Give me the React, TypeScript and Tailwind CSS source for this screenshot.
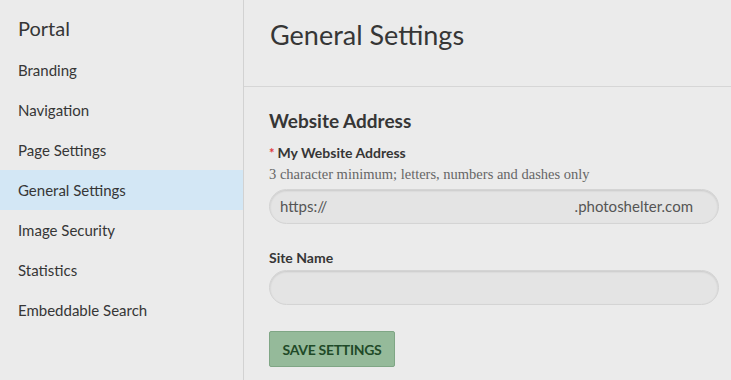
import React from "react";

const items = ["Branding", "Navigation", "Page Settings", "General Settings", "Image Security", "Statistics", "Embeddable Search"];

export default function App() {
  return (
    <div className="flex h-[380px] w-[731px] overflow-hidden bg-[#ebebeb] text-[#363636]" style={{ fontFamily: "Lato, 'Open Sans', sans-serif" }}>
      <aside className="w-[244px] shrink-0 border-r border-[#d2d2d2] pt-[14px]">
        <div className="px-[18px] text-[20px] leading-[28px]">Portal</div>
        <ul className="mt-[8px]">
          {items.map((it) => (
            <li
              key={it}
              className={`flex h-[40px] items-center px-[18px] text-[15px] ${it === "General Settings" ? "bg-[#d3e7f5]" : ""}`}
            >
              {it}
            </li>
          ))}
        </ul>
      </aside>
      <main className="flex-1">
        <div className="h-[87px] border-b border-[#d6d6d6] px-[26px] pt-[18px]">
          <h1 className="text-[27px] leading-[34px]">General Settings</h1>
        </div>
        <div className="px-[25px] pt-[22px]">
          <h2 className="text-[19px] font-bold leading-[24px]">Website Address</h2>
          <div className="mt-[11px] flex items-center text-[14px] font-bold leading-[18px]">
            <span className="mr-[3px] text-[13px] text-[#e0393e]">*</span>My Website Address
          </div>
          <div className="mt-[3px] text-[14.5px] leading-[18px] text-[#666]" style={{ fontFamily: "'Liberation Serif', serif" }}>
            3 character minimum; letters, numbers and dashes only
          </div>
          <div className="mt-[6px] flex h-[35px] w-[450px] items-center justify-between rounded-full border border-[#d4d4d4] bg-[#e4e4e4] px-[10px] text-[15px] text-[#555] shadow-[inset_0_1px_2px_rgba(0,0,0,0.12)]">
            <span>https://</span>
            <span className="mr-[15px]">.photoshelter.com</span>
          </div>
          <div className="mt-[25px] text-[14px] font-bold leading-[18px]">Site Name</div>
          <div className="mt-[3px] h-[35px] w-[450px] rounded-full border border-[#d4d4d4] bg-[#e4e4e4] shadow-[inset_0_1px_2px_rgba(0,0,0,0.12)]" />
          <button className="mt-[26px] flex h-[36px] w-[126px] items-center justify-center rounded-[2px] border border-[#7fa685] bg-[#95ba9a] text-[14px] font-bold uppercase tracking-[-0.3px] text-[#1f4a28]">
            Save Settings
          </button>
        </div>
      </main>
    </div>
  );
}
